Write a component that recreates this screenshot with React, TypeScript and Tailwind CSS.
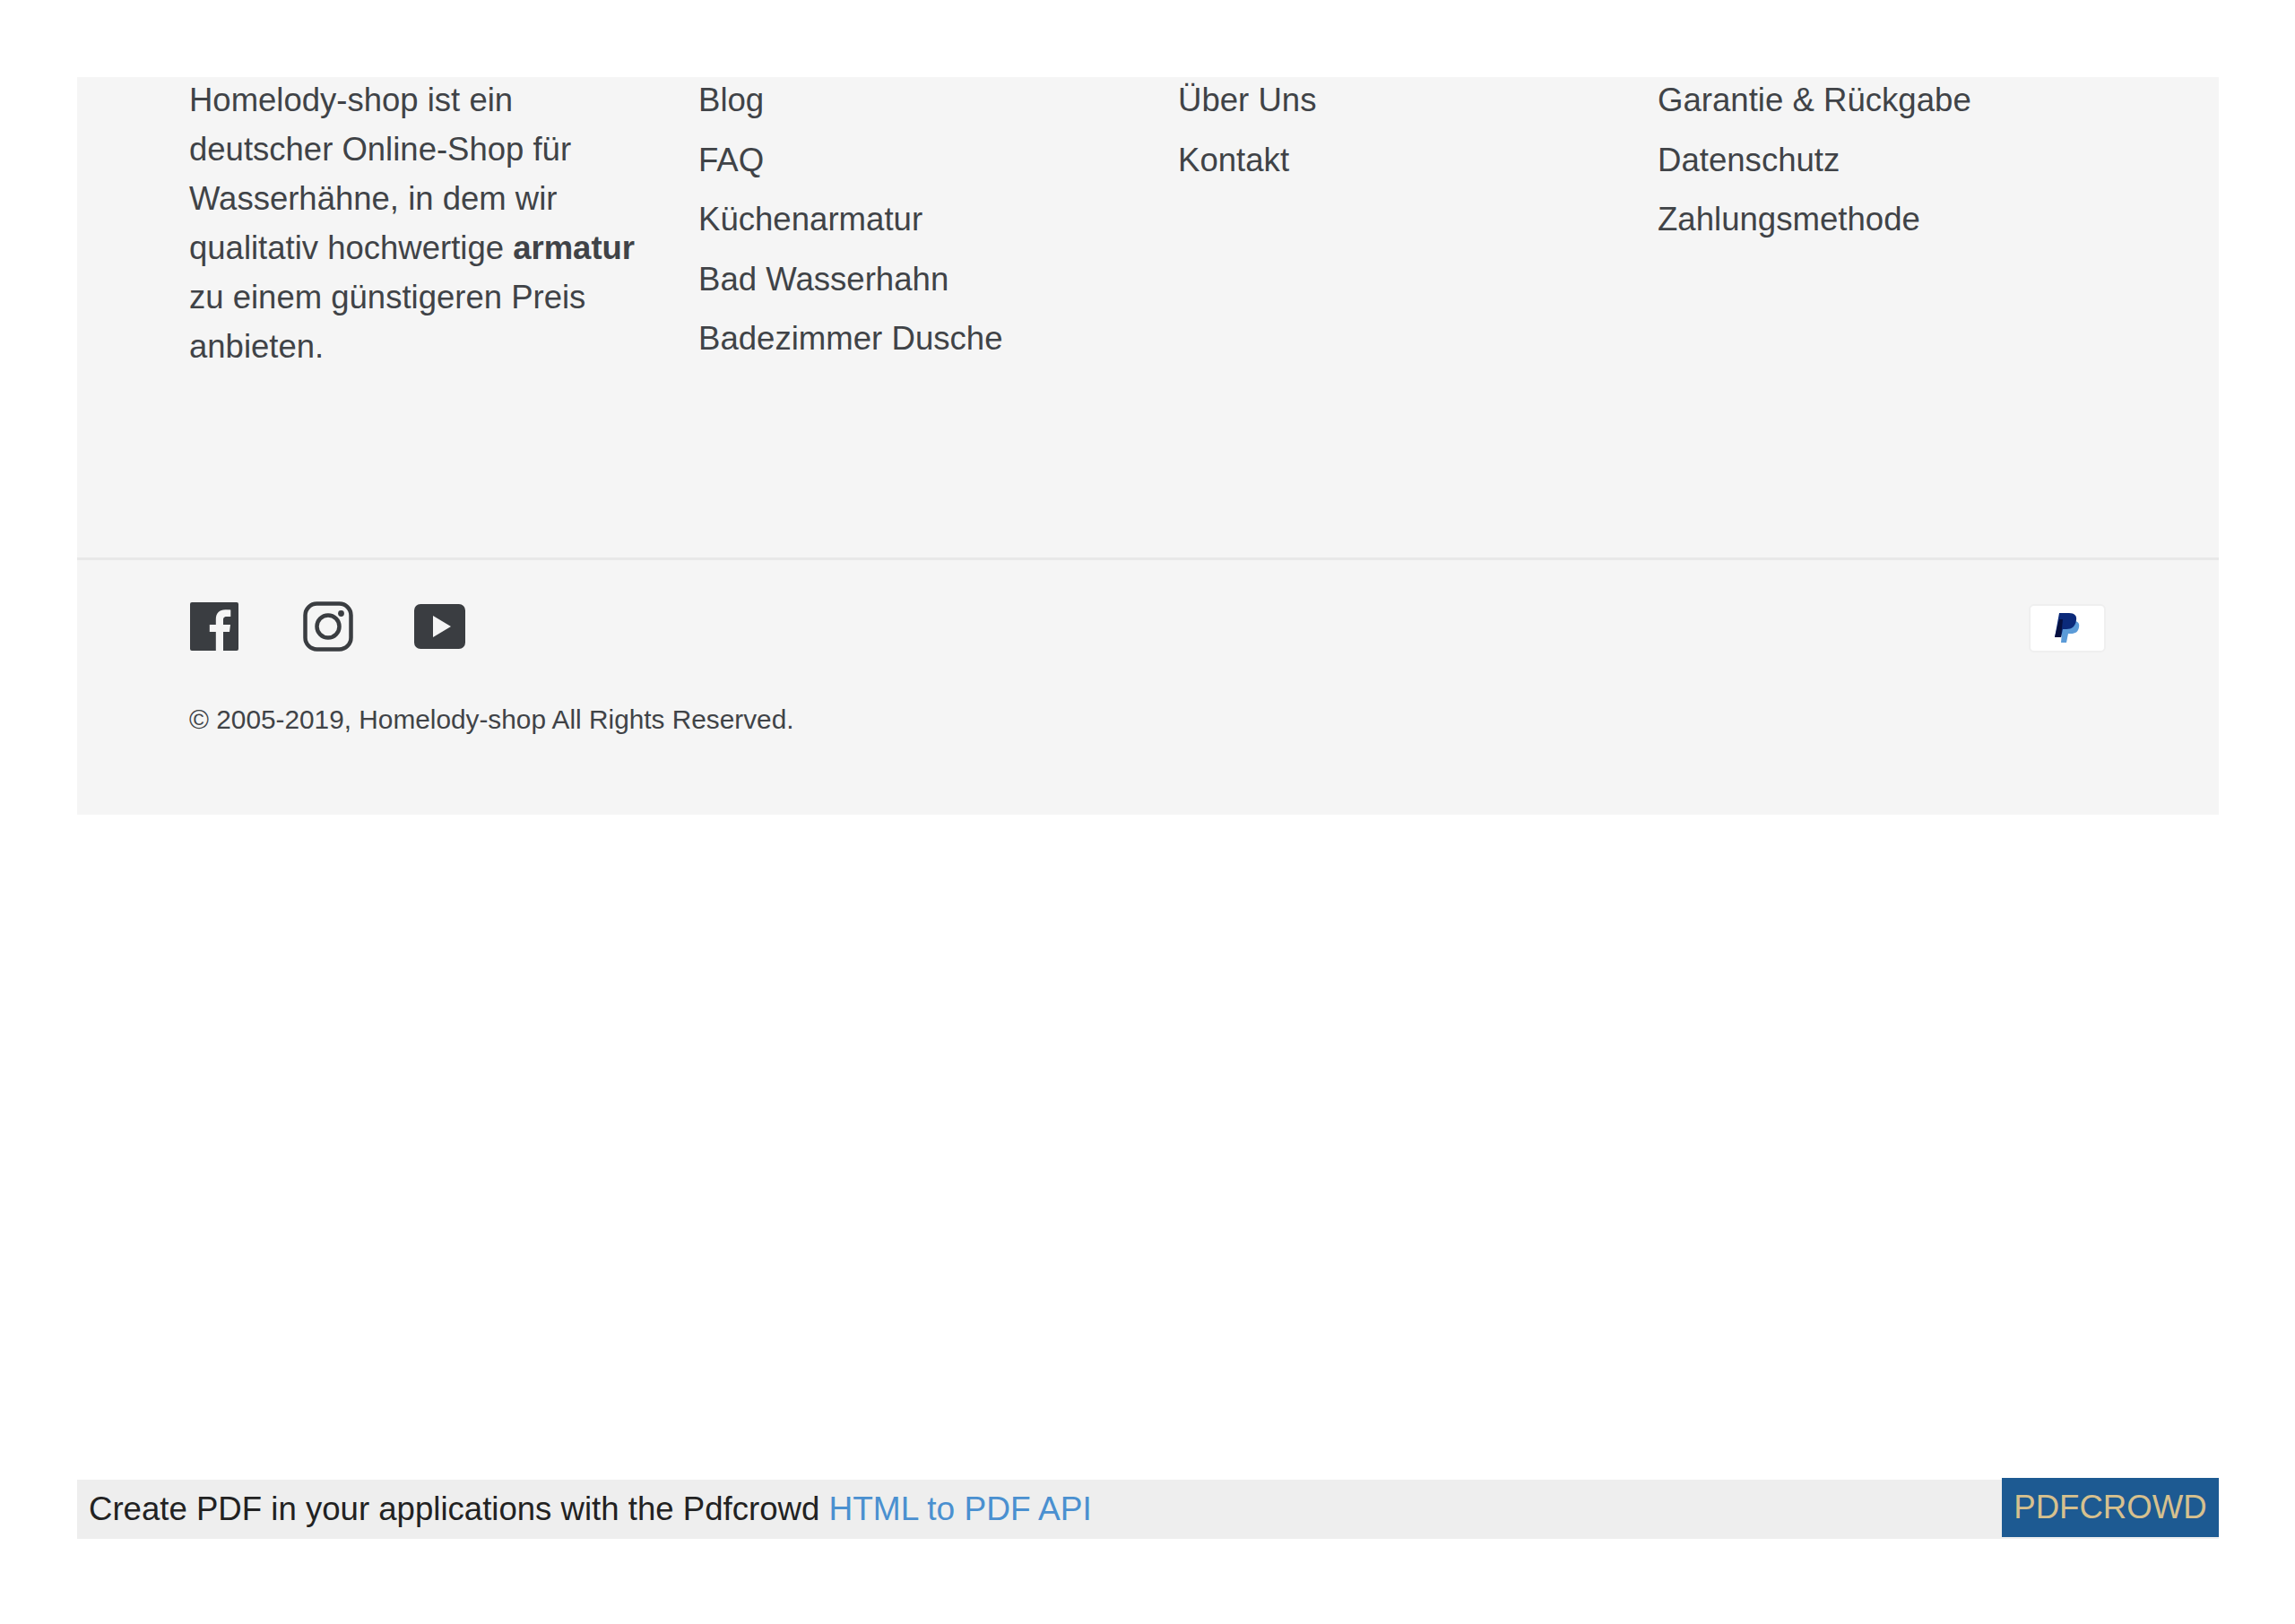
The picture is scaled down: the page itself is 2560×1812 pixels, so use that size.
const linkCols = [
  { width: 'w-[535px]', links: ['Blog', 'FAQ', 'Küchenarmatur', 'Bad Wasserhahn', 'Badezimmer Dusche'] },
  { width: 'w-[535px]', links: ['Über Uns', 'Kontakt'] },
  { width: 'w-[500px]', links: ['Garantie & Rückgabe', 'Datenschutz', 'Zahlungsmethode'] },
]

function FacebookIcon() {
  return (
    <svg width="54" height="54" viewBox="0 0 54 54" className="block">
      <path
        fill="#3a3d41"
        d="M2 0h50a2 2 0 0 1 2 2v50a2 2 0 0 1-2 2H37V33h7l1-8h-8v-5c0-2.400.7-4 4-4h4.300V8.600C44.500 8.500 42 8.300 39.200 8.300c-6.200 0-10.400 3.800-10.400 10.700v6h-7v8h7v21H2a2 2 0 0 1-2-2V2a2 2 0 0 1 2-2z"
      />
    </svg>
  )
}

function InstagramIcon() {
  return (
    <svg width="56" height="56" viewBox="0 0 56 56" fill="none" stroke="#3a3d41" className="block">
      <rect x="2.500" y="2.500" width="51" height="51" rx="13" strokeWidth="4.500" />
      <circle cx="28" cy="28" r="12.500" strokeWidth="4.500" />
      <circle cx="42.500" cy="13.500" r="3.400" fill="#3a3d41" stroke="none" />
    </svg>
  )
}

function YoutubeIcon() {
  return (
    <svg width="57" height="50" viewBox="0 0 57 50" className="block">
      <path
        fill="#3a3d41"
        fillRule="evenodd"
        d="M7 0h43a7 7 0 0 1 7 7v36a7 7 0 0 1-7 7H7a7 7 0 0 1-7-7V7a7 7 0 0 1 7-7zm14 13v24l20-12z"
      />
    </svg>
  )
}

function PaypalIcon() {
  return (
    <svg width="28" height="34" viewBox="0 0 28 34" className="block">
      <path fill="#5b9bd8" d="M9 9h13c4 0 6 3 5 7-1 5-4 7-9 7h-3l-2 10H7z" />
      <path fill="#0b2a7a" d="M5 0h11c6 0 9 3 8 8-1 7-5 10-11 10H9l-2 9H0z" />
      <path fill="#06103f" d="M5 7h4L7 27H0z" />
    </svg>
  )
}

export default function App() {
  return (
    <div className="h-[1812px] w-full bg-white pl-[86px] pr-[85px] pt-[86px] font-['Liberation_Sans',Arial,sans-serif]">
      <footer className="h-[823px] bg-[#f5f5f5] text-[#404347]">
        <div className="flex h-[539px] border-b-[3px] border-[#e8e8e8] pl-[125px]">
          <p className="-mt-[2px] w-[568px] pr-[55px] text-[36.500px] leading-[55px]">
            Homelody-shop ist ein deutscher Online-Shop für Wasserhähne, in dem wir qualitativ hochwertige <strong>armatur</strong> zu einem günstigeren Preis anbieten.
          </p>
          {linkCols.map(col => (
            <ul key={col.links[0]} className={`-mt-[2px] ${col.width} text-[36.600px] leading-[55px]`}>
              {col.links.map(link => (
                <li key={link} className="mb-[11.500px]">{link}</li>
              ))}
            </ul>
          ))}
        </div>

        <div className="flex items-start justify-between pl-[126px] pr-[126px] pt-[46px]">
          <div>
            <div className="flex h-[56px] items-center">
              <FacebookIcon />
              <span className="ml-[72px]"><InstagramIcon /></span>
              <span className="ml-[68px]"><YoutubeIcon /></span>
            </div>
            <p className="-ml-[1px] mt-[53.500px] text-[29.800px] leading-[44px]">© 2005-2019, Homelody-shop All Rights Reserved.</p>
          </div>
          <div className="mt-[3px] flex h-[54px] w-[86px] items-center justify-center rounded-[6px] border-[2px] border-[#efefef] bg-white">
            <PaypalIcon />
          </div>
        </div>
      </footer>

      <div className="mt-[742px] flex h-[66px] items-center justify-between bg-[#eeeeee] text-[36.600px] text-[#222222]">
        <p className="pl-[13px]">
          Create PDF in your applications with the Pdfcrowd <a className="text-[37.100px] text-[#4a90d0]">HTML to PDF API</a>
        </p>
        <a className="flex h-[66px] w-[242px] -translate-y-[2px] items-center justify-center bg-[#1d5a92] text-[#d6c08e]">PDFCROWD</a>
      </div>
    </div>
  )
}
